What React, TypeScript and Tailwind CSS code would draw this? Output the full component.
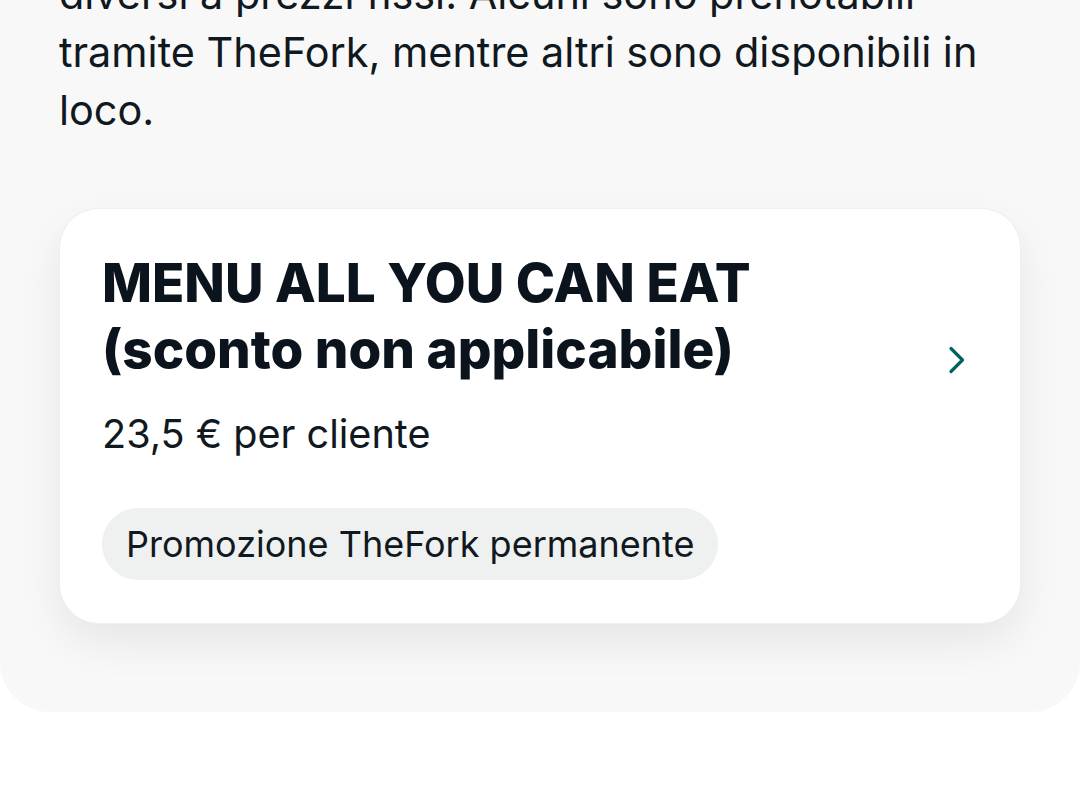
import React from "react";

export default function App() {
  return (
    <div className="min-h-[808px] w-[1080px] overflow-hidden bg-white font-['Inter',sans-serif] text-[#101820]">
      <div className="rounded-b-[50px] bg-[#f8f8f8] px-[59px] pb-[88px]">
        <p className="-mt-[35px] text-[41.4px] leading-[58px] font-normal">
          diversi a prezzi fissi. Alcuni sono prenotabili tramite TheFork, mentre altri sono disponibili in loco.
        </p>
        <div className="mt-[69px] flex h-[416px] rounded-[40px] border border-[#efefef] bg-white pt-[41px] pl-[42px] pr-[54px] shadow-[0_18px_44px_rgba(0,0,0,0.075)]">
          <div className="flex flex-1 flex-col items-start">
            <h2 className="text-[53px] leading-[66px] font-extrabold text-[#0b131c]">
              MENU ALL YOU CAN EAT
              <br />
              (sconto non applicabile)
            </h2>
            <div className="mt-[28px] text-[39.6px] leading-[48px]">23,5 € per cliente</div>
            <div className="mt-[50px] flex h-[72px] items-center rounded-full bg-[#eff0f0] px-[24px] text-[36px]">
              Promozione TheFork permanente
            </div>
          </div>
          <div className="pt-[96px]">
            <svg width="19" height="28" viewBox="0 0 19 28" fill="none">
              <path d="M4 2.5 L15.5 14 L4 25.5" stroke="#00645a" strokeWidth="3.2" strokeLinecap="round" strokeLinejoin="round" />
            </svg>
          </div>
        </div>
      </div>
    </div>
  );
}
